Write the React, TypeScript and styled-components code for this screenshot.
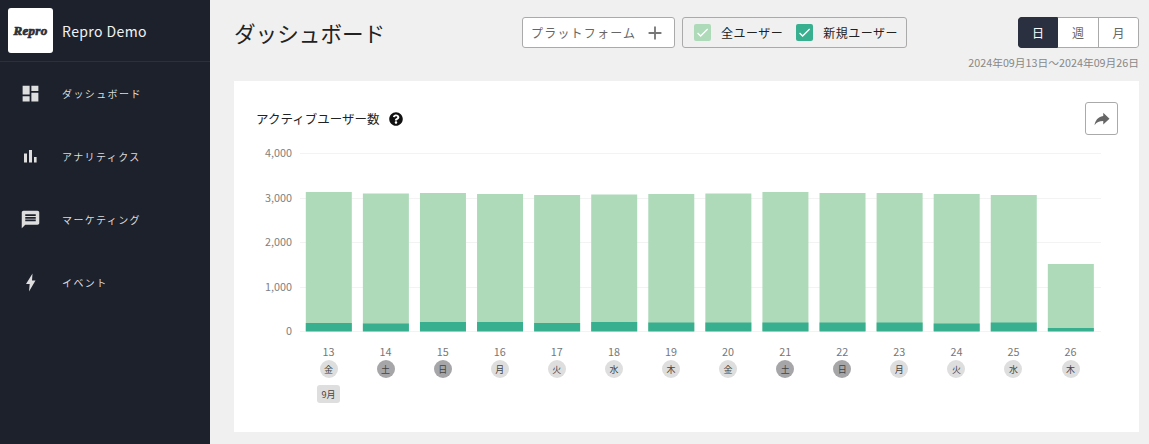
import React from "react";
import styled, { createGlobalStyle } from "styled-components";
import { MdDashboard, MdMessage, MdCheck, MdAdd } from "react-icons/md";
import { IoMdShareAlt } from "react-icons/io";
import { FaQuestionCircle } from "react-icons/fa";

const Global = createGlobalStyle`
  html, body { margin: 0; padding: 0; height: 100%; background: #f0f0f0; }
  body { font-family: "Noto Sans CJK JP", "Noto Sans", sans-serif; overflow: hidden; }
  * { box-sizing: border-box; }
`;

const Page = styled.div`
  display: flex;
  width: 1149px;
  height: 444px;
`;

const Sidebar = styled.aside`
  width: 210px;
  flex: none;
  background: #1d212c;
  color: #e8e8e8;
`;

const Brand = styled.div`
  display: flex;
  align-items: center;
  gap: 9px;
  height: 62px;
  padding-left: 8px;
  border-bottom: 1px solid #2c3039;
`;

const LogoBox = styled.div`
  width: 45px;
  height: 45px;
  border-radius: 3px;
  background: #fff;
  display: flex;
  align-items: center;
  justify-content: center;
`;

const LogoText = styled.span`
  font-family: "Liberation Serif", serif;
  font-weight: 700;
  font-style: italic;
  font-size: 13px;
  letter-spacing: 0.35px;
  color: #2b2f3b;
  -webkit-text-stroke: 0.7px #2b2f3b;
`;

const BrandName = styled.span`
  font-size: 14px;
  letter-spacing: 0.4px;
  color: #f2f2f2;
`;

const Nav = styled.nav`
  display: flex;
  flex-direction: column;
`;

const NavItem = styled.div`
  display: flex;
  align-items: center;
  height: 63px;
  padding-left: 20px;
`;

const NavIcon = styled.span<{ $size: number }>`
  width: 21px;
  height: 21px;
  margin-right: 21px;
  display: flex;
  align-items: center;
  justify-content: center;
  color: #dedede;
  font-size: ${(p) => p.$size}px;
`;

const NavLabel = styled.span`
  font-size: 10px;
  letter-spacing: 1.4px;
  color: #dcdcdc;
`;

const Main = styled.main`
  flex: 1;
  min-width: 0;
  padding: 17px 10px 12px 24px;
  display: flex;
  flex-direction: column;
`;

const Header = styled.header`
  display: flex;
  align-items: center;
  height: 31px;
`;

const Title = styled.h1`
  margin: 0 137px 0 0;
  width: 151px;
  font-size: 21.6px;
  font-weight: 400;
  white-space: nowrap;
  color: #222;
`;

const PlatformButton = styled.div`
  width: 153px;
  height: 31px;
  border: 1px solid #aaa;
  border-radius: 3px;
  background: #fff;
  display: flex;
  align-items: center;
  justify-content: space-between;
  padding: 0 8px 0 8px;
  font-size: 12px;
  letter-spacing: 1.2px;
  white-space: nowrap;
  color: #666;
`;

const PlusIcon = styled(MdAdd)`
  flex: none;
  font-size: 22px;
  color: #777;
`;

const Legend = styled.div`
  width: 225px;
  height: 31px;
  margin-left: 7px;
  border: 1px solid #aaa;
  border-radius: 3px;
  display: flex;
  align-items: center;
  padding-left: 11px;
`;

const LegendCheck = styled.span<{ $color: string }>`
  width: 17px;
  height: 17px;
  border-radius: 2px;
  background: ${(p) => p.$color};
  color: #fff;
  display: flex;
  align-items: center;
  justify-content: center;
  font-size: 15px;
  margin-right: 10px;
`;

const LegendLabel = styled.span<{ $gap: number }>`
  font-size: 12px;
  letter-spacing: 0.5px;
  color: #222;
  margin-right: ${(p) => p.$gap}px;
  white-space: nowrap;
`;

const Tabs = styled.div`
  margin-left: auto;
  display: flex;
  height: 31px;
  width: 121px;
  border-radius: 3px;
  overflow: hidden;
  background: #fff;
`;

const Tab = styled.span<{ $active?: boolean; $w: number }>`
  width: ${(p) => p.$w}px;
  display: flex;
  align-items: center;
  justify-content: center;
  font-size: 12px;
  border: 1px solid ${(p) => (p.$active ? "#2b3040" : "#aaa")};
  background: ${(p) => (p.$active ? "#2b3040" : "#fff")};
  color: ${(p) => (p.$active ? "#fff" : "#666")};
  & + & { border-left: none; }
  &:first-child { border-radius: 3px 0 0 3px; }
  &:last-child { border-radius: 0 3px 3px 0; }
`;

const DateRange = styled.div`
  margin-top: 7px;
  height: 16px;
  line-height: 16px;
  text-align: right;
  font-size: 10.75px;
  color: #888;
  white-space: nowrap;
`;

const Card = styled.section`
  margin-top: 10px;
  width: 905px;
  height: 351px;
  background: #fff;
  padding: 21px 21px 0 22px;
  display: flex;
  flex-direction: column;
`;

const CardHead = styled.div`
  display: flex;
  align-items: center;
  height: 33px;
`;

const CardTitle = styled.h2`
  margin: 0;
  font-size: 12.5px;
  font-weight: 400;
  color: #222;
  white-space: nowrap;
`;

const Help = styled(FaQuestionCircle)`
  margin-left: 10px;
  font-size: 14px;
  color: #111;
`;

const ShareButton = styled.button`
  margin-left: auto;
  width: 33px;
  height: 33px;
  padding: 0;
  border: 1px solid #aaa;
  border-radius: 3px;
  background: #fff;
  color: #666;
  display: flex;
  align-items: center;
  justify-content: center;
  font-size: 20px;
`;

const Plot = styled.svg`
  display: block;
  margin: 8px 0 0 -22px;
  width: 905px;
  height: 196px;
  flex: none;
`;

const AxisText = styled.text`
  font-family: "Noto Sans CJK JP", sans-serif;
  font-size: 10.8px;
  fill: #808080;
`;

const Days = styled.div`
  display: flex;
  margin: 4px 0 0 44px;
`;

const Day = styled.div`
  width: 57.08px;
  display: flex;
  flex-direction: column;
  align-items: center;
`;

const DayNum = styled.span`
  font-size: 10.8px;
  line-height: 16px;
  color: #777;
`;

const Weekday = styled.span<{ $off?: boolean }>`
  margin-top: 1px;
  width: 18px;
  height: 18px;
  border-radius: 50%;
  background: ${(p) => (p.$off ? "#a6a6a9" : "#dedede")};
  color: #444;
  font-size: 9px;
  display: flex;
  align-items: center;
  justify-content: center;
`;

const MonthTag = styled.span`
  margin-top: 7px;
  width: 23px;
  height: 18px;
  border-radius: 3px;
  background: #dedede;
  color: #444;
  font-size: 9px;
  display: flex;
  align-items: center;
  justify-content: center;
`;

const StatsIcon = () => (
  <svg width="21" height="21" viewBox="0 0 21 21" fill="currentColor">
    <rect x="4" y="7.5" width="3" height="9" />
    <rect x="9" y="4" width="3" height="12.5" />
    <rect x="14" y="11" width="2.6" height="5.5" />
  </svg>
);

const BoltIcon = () => (
  <svg width="21" height="21" viewBox="0 0 21 21" fill="currentColor">
    <path d="M12.5 1.5 6 12h3.7L9 19.5 15.5 8.5H12z" />
  </svg>
);

const nav = [
  { label: "ダッシュボード", Icon: MdDashboard, size: 23 },
  { label: "アナリティクス", Icon: StatsIcon, size: 21 },
  { label: "マーケティング", Icon: MdMessage, size: 23 },
  { label: "イベント", Icon: BoltIcon, size: 21 },
];

const ticks = [
  { label: "4,000", y: 153 },
  { label: "3,000", y: 198 },
  { label: "2,000", y: 242 },
  { label: "1,000", y: 287 },
  { label: "0", y: 331 },
];

const bars = [
  { d: 13, w: "金", top: 192, mid: 323 },
  { d: 14, w: "土", top: 193.5, mid: 323.5, off: true },
  { d: 15, w: "日", top: 193, mid: 322, off: true },
  { d: 16, w: "月", top: 194, mid: 322 },
  { d: 17, w: "火", top: 195, mid: 323 },
  { d: 18, w: "水", top: 194.5, mid: 322 },
  { d: 19, w: "木", top: 194, mid: 322.5 },
  { d: 20, w: "金", top: 193.5, mid: 322.5 },
  { d: 21, w: "土", top: 192, mid: 322.5, off: true },
  { d: 22, w: "日", top: 193, mid: 322.5, off: true },
  { d: 23, w: "月", top: 193, mid: 322.5 },
  { d: 24, w: "火", top: 194, mid: 323.5 },
  { d: 25, w: "水", top: 195, mid: 322.5 },
  { d: 26, w: "木", top: 264, mid: 328 },
];

const OFFSET_X = 234;
const OFFSET_Y = 143;

export default function App() {
  return (
    <Page>
      <Global />
      <Sidebar>
        <Brand>
          <LogoBox>
            <LogoText>Repro</LogoText>
          </LogoBox>
          <BrandName>Repro Demo</BrandName>
        </Brand>
        <Nav>
          {nav.map(({ label, Icon, size }) => (
            <NavItem key={label}>
              <NavIcon $size={size}>
                <Icon />
              </NavIcon>
              <NavLabel>{label}</NavLabel>
            </NavItem>
          ))}
        </Nav>
      </Sidebar>
      <Main>
        <Header>
          <Title>ダッシュボード</Title>
          <PlatformButton>
            プラットフォーム
            <PlusIcon />
          </PlatformButton>
          <Legend>
            <LegendCheck $color="#aedaba">
              <MdCheck />
            </LegendCheck>
            <LegendLabel $gap={13}>全ユーザー</LegendLabel>
            <LegendCheck $color="#38af8f">
              <MdCheck />
            </LegendCheck>
            <LegendLabel $gap={0}>新規ユーザー</LegendLabel>
          </Legend>
          <Tabs>
            <Tab $active $w={40}>日</Tab>
            <Tab $w={41}>週</Tab>
            <Tab $w={40}>月</Tab>
          </Tabs>
        </Header>
        <DateRange>2024年09月13日〜2024年09月26日</DateRange>
        <Card>
          <CardHead>
            <CardTitle>アクティブユーザー数</CardTitle>
            <Help />
            <ShareButton aria-label="共有">
              <IoMdShareAlt />
            </ShareButton>
          </CardHead>
          <Plot viewBox={`${OFFSET_X} ${OFFSET_Y} 905 196`}>
            {ticks.map((t) => (
              <g key={t.label}>
                <line x1={300} x2={1101} y1={t.y + 0.5} y2={t.y + 0.5} stroke="#f3f3f3" />
                <AxisText x={292} y={t.y + 4} textAnchor="end">{t.label}</AxisText>
              </g>
            ))}
            {bars.map((b, i) => {
              const x = 305.8 + i * 57.08;
              return (
                <g key={b.d}>
                  <rect x={x} y={b.top} width={46} height={331 - b.top} fill="#aedaba" />
                  <rect x={x} y={b.mid} width={46} height={331.5 - b.mid} fill="#38af8f" />
                </g>
              );
            })}
          </Plot>
          <Days>
            {bars.map((b) => (
              <Day key={b.d}>
                <DayNum>{b.d}</DayNum>
                <Weekday $off={b.off}>{b.w}</Weekday>
                {b.d === 13 && <MonthTag>9月</MonthTag>}
              </Day>
            ))}
          </Days>
        </Card>
      </Main>
    </Page>
  );
}
